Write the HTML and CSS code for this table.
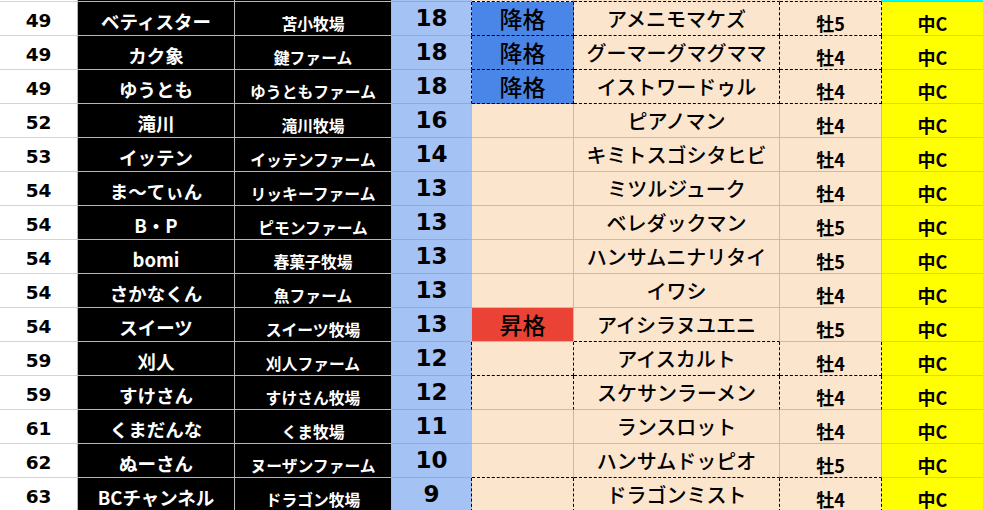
FILE: index.html
```html
<!DOCTYPE html>
<html lang="ja">
<head>
<meta charset="utf-8">
<title>ランキング</title>
<link rel="stylesheet" href="styles.css">
</head>
<body>
<div class="sheet">
  <div class="row stub db">
    <div class="c a"></div><div class="c b"></div><div class="c n"></div><div class="c d"></div><div class="c e"></div><div class="c f"></div><div class="c g"></div><div class="c h cyan"></div>
  </div>
  <div class="row dash">
    <div class="c a">49</div><div class="c b">ベティスター</div><div class="c n">苫小牧場</div><div class="c d">18</div><div class="c e down">降格</div><div class="c f">アメニモマケズ</div><div class="c g">牡5</div><div class="c h">中C</div>
  </div>
  <div class="row dash">
    <div class="c a">49</div><div class="c b">カク象</div><div class="c n">鍵ファーム</div><div class="c d">18</div><div class="c e down">降格</div><div class="c f">グーマーグマグママ</div><div class="c g">牡4</div><div class="c h">中C</div>
  </div>
  <div class="row dash">
    <div class="c a">49</div><div class="c b">ゆうとも</div><div class="c n">ゆうともファーム</div><div class="c d">18</div><div class="c e down">降格</div><div class="c f">イストワードゥル</div><div class="c g">牡4</div><div class="c h">中C</div>
  </div>
  <div class="row">
    <div class="c a">52</div><div class="c b">滝川</div><div class="c n">滝川牧場</div><div class="c d">16</div><div class="c e"></div><div class="c f">ピアノマン</div><div class="c g">牡4</div><div class="c h">中C</div>
  </div>
  <div class="row">
    <div class="c a">53</div><div class="c b">イッテン</div><div class="c n">イッテンファーム</div><div class="c d">14</div><div class="c e"></div><div class="c f">キミトスゴシタヒビ</div><div class="c g">牡4</div><div class="c h">中C</div>
  </div>
  <div class="row">
    <div class="c a">54</div><div class="c b">ま～てぃん</div><div class="c n">リッキーファーム</div><div class="c d">13</div><div class="c e"></div><div class="c f">ミツルジューク</div><div class="c g">牡4</div><div class="c h">中C</div>
  </div>
  <div class="row">
    <div class="c a">54</div><div class="c b">B・P</div><div class="c n">ピモンファーム</div><div class="c d">13</div><div class="c e"></div><div class="c f">ベレダックマン</div><div class="c g">牡5</div><div class="c h">中C</div>
  </div>
  <div class="row">
    <div class="c a">54</div><div class="c b">bomi</div><div class="c n">春菓子牧場</div><div class="c d">13</div><div class="c e"></div><div class="c f">ハンサムニナリタイ</div><div class="c g">牡5</div><div class="c h">中C</div>
  </div>
  <div class="row">
    <div class="c a">54</div><div class="c b">さかなくん</div><div class="c n">魚ファーム</div><div class="c d">13</div><div class="c e"></div><div class="c f">イワシ</div><div class="c g">牡4</div><div class="c h">中C</div>
  </div>
  <div class="row dbf">
    <div class="c a">54</div><div class="c b">スイーツ</div><div class="c n">スイーツ牧場</div><div class="c d">13</div><div class="c e up">昇格</div><div class="c f">アイシラヌユエニ</div><div class="c g">牡5</div><div class="c h">中C</div>
  </div>
  <div class="row dash">
    <div class="c a">59</div><div class="c b">刈人</div><div class="c n">刈人ファーム</div><div class="c d">12</div><div class="c e"></div><div class="c f">アイスカルト</div><div class="c g">牡4</div><div class="c h">中C</div>
  </div>
  <div class="row dash sb">
    <div class="c a">59</div><div class="c b">すけさん</div><div class="c n">すけさん牧場</div><div class="c d">12</div><div class="c e"></div><div class="c f">スケサンラーメン</div><div class="c g">牡4</div><div class="c h">中C</div>
  </div>
  <div class="row">
    <div class="c a">61</div><div class="c b">くまだんな</div><div class="c n">くま牧場</div><div class="c d">11</div><div class="c e"></div><div class="c f">ランスロット</div><div class="c g">牡4</div><div class="c h">中C</div>
  </div>
  <div class="row db">
    <div class="c a">62</div><div class="c b">ぬーさん</div><div class="c n">ヌーザンファーム</div><div class="c d">10</div><div class="c e"></div><div class="c f">ハンサムドッピオ</div><div class="c g">牡5</div><div class="c h">中C</div>
  </div>
  <div class="row dash">
    <div class="c a">63</div><div class="c b">BCチャンネル</div><div class="c n">ドラゴン牧場</div><div class="c d">9</div><div class="c e"></div><div class="c f">ドラゴンミスト</div><div class="c g">牡4</div><div class="c h">中C</div>
  </div>
</div>
</body>
</html>
```

FILE: styles.css
```css
html, body {
  margin: 0;
  padding: 0;
  background: #ffffff;
  overflow: hidden;
}

.sheet {
  width: 983px;
  height: 512px;
  font-family: "Noto Sans CJK JP", "Noto Sans", sans-serif;
}

.row {
  display: grid;
  grid-template-columns: 78px 157px 157px 80px 102px 206px 102px 102px;
  height: 34px;
}

.row.stub {
  height: 2px;
}

.c {
  box-sizing: border-box;
  display: flex;
  justify-content: center;
  align-items: center;
  white-space: nowrap;
  overflow: hidden;
  border-right: 1px solid transparent;
  border-bottom: 1px solid transparent;
  line-height: 1;
}

/* rank column */
.a {
  background: #ffffff;
  color: #000000;
  border-right-color: #b4b4b4;
  border-bottom-color: #d4d4d4;
  font-family: "DejaVu Sans", "Noto Sans", sans-serif;
  font-weight: 700;
  font-size: 18.5px;
  padding-top: 6px;
}

/* owner name */
.b {
  background: #000000;
  color: #ffffff;
  border-right-color: #b7b7b7;
  border-bottom-color: #b7b7b7;
  font-weight: 700;
  font-size: 18.5px;
  padding-top: 6px;
}

/* farm name */
.n {
  background: #000000;
  color: #ffffff;
  border-right-color: #b7b7b7;
  border-bottom-color: #b7b7b7;
  font-weight: 700;
  font-size: 15.8px;
  padding-top: 11px;
}

/* points */
.d {
  background: #a4c2f4;
  color: #000000;
  border-right-color: #a9bfe6;
  border-bottom-color: #8eaadc;
  font-family: "DejaVu Sans", "Noto Sans", sans-serif;
  font-weight: 700;
  font-size: 23px;
}

/* status */
.e {
  background: #fce5cd;
  color: #000000;
  border-right-color: #bdbdbd;
  border-bottom-color: #bdbdbd;
  font-size: 23px;
  font-weight: 500;
}

.e.down {
  background: #4a86e8;
}

.e.up {
  background: #ea4335;
}

/* horse name */
.f {
  background: #fce5cd;
  color: #000000;
  border-right-color: #bdbdbd;
  border-bottom-color: #bdbdbd;
  font-size: 20px;
  font-weight: 500;
  padding-top: 1px;
}

/* sex / age */
.g {
  background: #fce5cd;
  color: #000000;
  border-right-color: #bdbdbd;
  border-bottom-color: #bdbdbd;
  font-size: 18px;
  font-weight: 700;
  padding-top: 8px;
}

/* class */
.h {
  background: #ffff00;
  color: #000000;
  border-bottom-color: #dede00;
  font-size: 18px;
  font-weight: 700;
  padding-top: 8px;
}

.h.cyan {
  background: #00ffff;
  border-bottom-color: #a9a9a9;
}

.stub .c {
  padding: 0;
}

/* dashed outlines */
.dash .d {
  border-right: 1px dashed #000000;
}

.dash .e,
.dash .f,
.dash .g {
  border-right: 1px dashed #000000;
  border-bottom: 1px dashed #000000;
}

.db .e,
.db .f,
.db .g {
  border-bottom: 1px dashed #000000;
}

.dbf .f {
  border-bottom: 1px dashed #000000;
}

.dash.sb .e,
.dash.sb .f,
.dash.sb .g {
  border-bottom: 1px solid #bdbdbd;
}
```
